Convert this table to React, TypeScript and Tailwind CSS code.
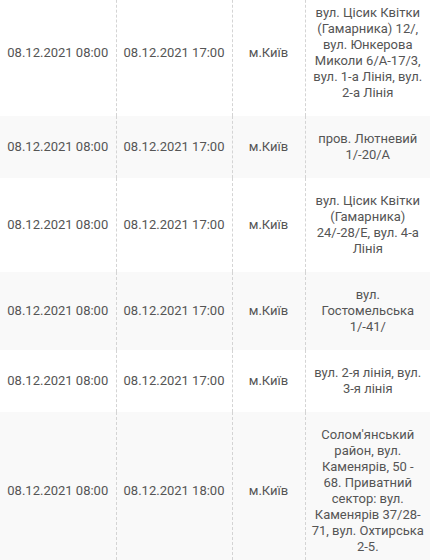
const rows = [
  {
    from: "08.12.2021 08:00",
    to: "08.12.2021 17:00",
    city: "м.Київ",
    addr: "вул. Цісик Квітки (Гамарника) 12/, вул. Юнкерова Миколи 6/А-17/3, вул. 1-а Лінія, вул. 2-а Лінія",
  },
  { from: "08.12.2021 08:00", to: "08.12.2021 17:00", city: "м.Київ", addr: "пров. Лютневий 1/-20/А" },
  {
    from: "08.12.2021 08:00",
    to: "08.12.2021 17:00",
    city: "м.Київ",
    addr: "вул. Цісик Квітки (Гамарника) 24/-28/Е, вул. 4-а Лінія",
  },
  { from: "08.12.2021 08:00", to: "08.12.2021 17:00", city: "м.Київ", addr: "вул. Гостомельська 1/-41/" },
  { from: "08.12.2021 08:00", to: "08.12.2021 17:00", city: "м.Київ", addr: "вул. 2-я лінія, вул. 3-я лінія" },
  {
    from: "08.12.2021 08:00",
    to: "08.12.2021 18:00",
    city: "м.Київ",
    addr: "Солом'янський район, вул. Каменярів, 50 - 68. Приватний сектор: вул. Каменярів 37/28-71, вул. Охтирська 2-5.",
  },
];

export default function App() {
  return (
    <div className="w-[430px] h-[560px] overflow-hidden bg-white">
      <table
        className="-mt-[10px] w-[430px] table-fixed border-collapse text-[13px] leading-4 text-[#555]"
        style={{ fontFamily: "Roboto, 'Noto Sans', sans-serif" }}
      >
        <colgroup>
          <col className="w-[116px]" />
          <col className="w-[116px]" />
          <col className="w-[73px]" />
          <col className="w-[125px]" />
        </colgroup>
        <tbody>
          {rows.map((r, i) => (
            <tr key={i} className={i % 2 === 1 ? "bg-[#f9f9f9]" : "bg-white"}>
              <td className="py-[15px] px-1 text-center border-r border-dashed border-[#d4d4d4]">{r.from}</td>
              <td className="py-[15px] px-1 text-center border-r border-dashed border-[#d4d4d4]">{r.to}</td>
              <td className="py-[15px] px-1 text-center border-r border-dashed border-[#d4d4d4]">{r.city}</td>
              <td className="py-[15px] px-[6px] text-center">{r.addr}</td>
            </tr>
          ))}
        </tbody>
      </table>
    </div>
  );
}
